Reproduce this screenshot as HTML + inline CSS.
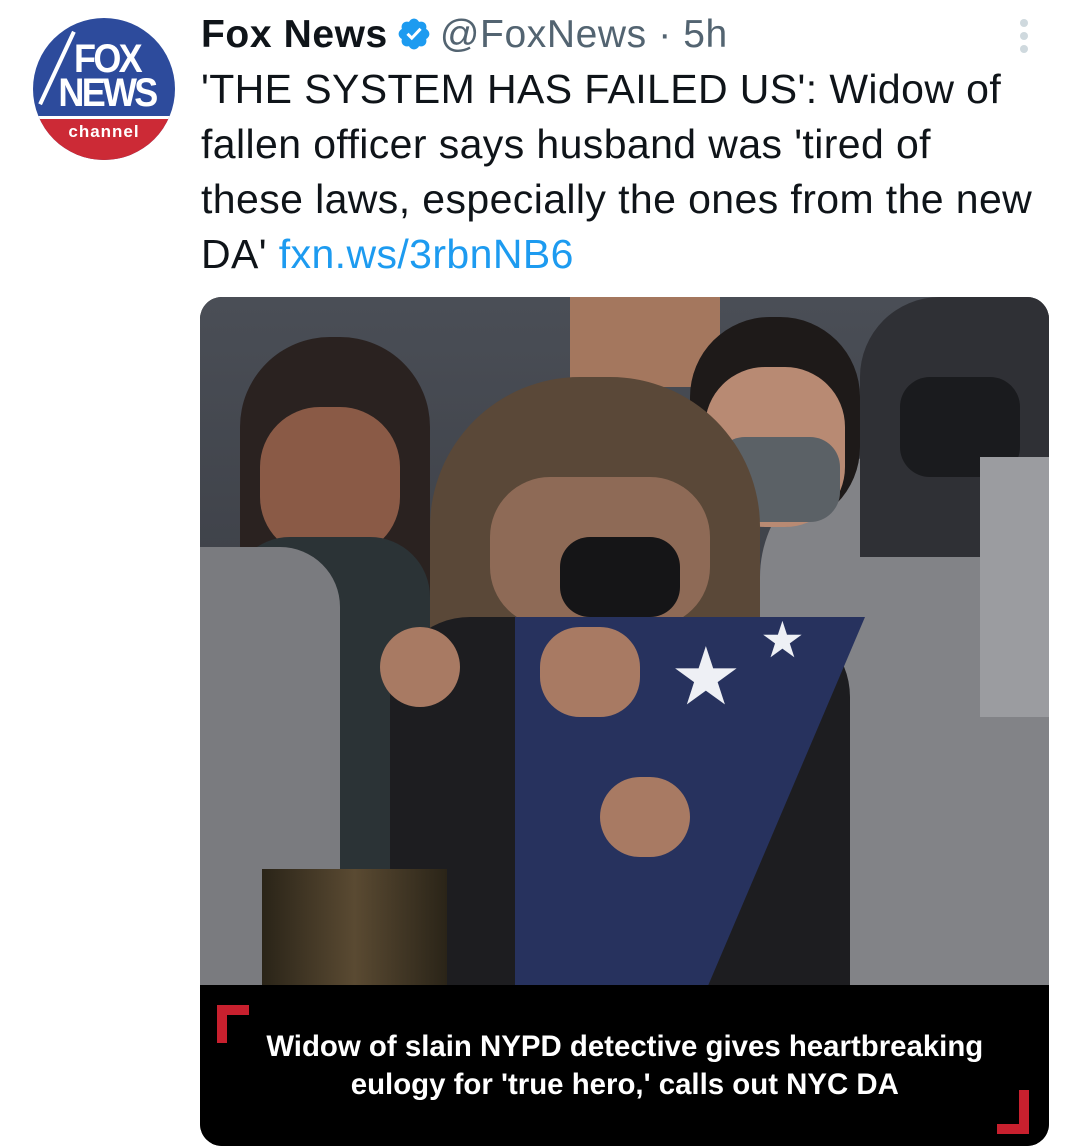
<!DOCTYPE html>
<html><head><meta charset="utf-8"><style>
*{margin:0;padding:0;box-sizing:border-box}
body{width:1080px;height:1148px;background:#fff;font-family:"Liberation Sans",Arial,sans-serif;position:relative;overflow:hidden}
.abs{position:absolute}
.txt{font-size:41px;color:#0f1419;line-height:55px;letter-spacing:0.4px;white-space:nowrap}
.card{left:200px;top:297px;width:849px;height:849px;border-radius:22px;overflow:hidden;background:#000}
</style></head><body>
<div class="abs" style="left:33px;top:18px;width:142px;height:142px;border-radius:50%;overflow:hidden;background:#2d4b9c">
  <div class="abs" style="left:0;top:100px;width:142px;height:42px;background:#cc2a36"></div>
  <div class="abs" style="left:0;top:98px;width:142px;height:3px;background:#fff"></div>
  <div class="abs" style="left:14px;top:24px;width:120px;text-align:center;color:#fff;font:bold 40px/34px 'Liberation Sans',sans-serif;letter-spacing:-3px;transform:scaleX(0.9)">FOX<br>NEWS</div>
  <div class="abs" style="left:0;top:104px;width:142px;text-align:center;color:#fff;font:bold 17px 'Liberation Sans',sans-serif;letter-spacing:1px">channel</div>
  <div class="abs" style="left:22px;top:10px;width:4px;height:80px;background:#fff;transform:rotate(25deg)"></div>
</div>
<div class="abs" style="left:201px;top:12px;font-size:39px;line-height:46px;white-space:nowrap;letter-spacing:0.6px">
  <b style="color:#0f1419">Fox News</b><svg width="36" height="36" viewBox="0 0 24 24" style="vertical-align:-5px;margin:0 8px 0 8px"><path fill="#1d9bf0" d="M22.25 12c0-1.43-.88-2.67-2.190-3.34.46-1.39.2-2.9-.81-3.91s-2.520-1.27-3.910-.81c-.66-1.31-1.91-2.19-3.34-2.19s-2.67.88-3.33 2.19c-1.4-.46-2.91-.2-3.92.81s-1.26 2.52-.8 3.91C2.630 9.33 1.75 10.57 1.75 12s.88 2.67 2.2 3.34c-.46 1.39-.21 2.9.8 3.910s2.52 1.26 3.91.81c.67 1.31 1.91 2.19 3.34 2.19s2.68-.88 3.34-2.19c1.39.45 2.9.2 3.91-.81s1.27-2.52.81-3.910c1.31-.67 2.19-1.91 2.19-3.34z"/><path fill="#fff" d="M10.54 16.2l-3.6-3.6 1.42-1.42 2.18 2.18 5.1-5.5 1.47 1.36z"/></svg><span style="color:#536471">@FoxNews · 5h</span>
</div>
<div class="abs" style="left:1020px;top:19px;width:8px">
  <div style="width:8px;height:8px;border-radius:50%;background:#cfd9de;margin-bottom:5px"></div>
  <div style="width:8px;height:8px;border-radius:50%;background:#cfd9de;margin-bottom:5px"></div>
  <div style="width:8px;height:8px;border-radius:50%;background:#cfd9de"></div>
</div>
<div class="abs txt" style="left:201px;top:62px;width:870px">'THE SYSTEM HAS FAILED US': Widow of<br>fallen officer says husband was 'tired of<br>these laws, especially the ones from the new<br>DA' <span style="color:#1d9bf0">fxn.ws/3rbnNB6</span></div>
<div class="abs card">
  <div class="abs" style="left:0;top:0;width:849px;height:688px;background:linear-gradient(180deg,#4a4e56,#2e3036)"></div>
  <div class="abs" style="left:40px;top:40px;width:190px;height:300px;border-radius:90px 90px 20px 20px;background:#2a2220"></div>
  <div class="abs" style="left:60px;top:110px;width:140px;height:150px;border-radius:60px;background:#8a5a46"></div>
  <div class="abs" style="left:30px;top:240px;width:200px;height:448px;border-radius:60px 60px 0 0;background:#2b3336"></div>
  <div class="abs" style="left:0;top:250px;width:140px;height:438px;border-radius:0 60px 0 0;background:#7a7b7f"></div>
  <div class="abs" style="left:370px;top:0;width:150px;height:90px;background:#a4775e"></div>
  <div class="abs" style="left:560px;top:160px;width:289px;height:528px;border-radius:120px 60px 0 0;background:#828387"></div>
  <div class="abs" style="left:490px;top:20px;width:170px;height:210px;border-radius:80px;background:#1e1a19"></div>
  <div class="abs" style="left:505px;top:70px;width:140px;height:160px;border-radius:60px;background:#b88a73"></div>
  <div class="abs" style="left:515px;top:140px;width:125px;height:85px;border-radius:30px;background:#5b6166"></div>
  <div class="abs" style="left:660px;top:0;width:189px;height:260px;border-radius:80px 20px 0 0;background:#2f3035"></div>
  <div class="abs" style="left:700px;top:80px;width:120px;height:100px;border-radius:30px;background:#1a1b1e"></div>
  <div class="abs" style="left:780px;top:160px;width:69px;height:260px;background:#9b9ca0"></div>
  <div class="abs" style="left:230px;top:80px;width:330px;height:608px;border-radius:150px 150px 20px 20px;background:#5a4838"></div>
  <div class="abs" style="left:290px;top:180px;width:220px;height:150px;border-radius:60px;background:#8e6a56"></div>
  <div class="abs" style="left:360px;top:240px;width:120px;height:80px;border-radius:30px;background:#151517"></div>
  <div class="abs" style="left:190px;top:320px;width:460px;height:368px;border-radius:80px 80px 0 0;background:#1d1d20"></div>
  <div class="abs" style="left:315px;top:320px;width:350px;height:370px;background:#27325e;clip-path:polygon(0 0,100% 0,55% 100%,0 100%)"></div>
  <div class="abs" style="left:470px;top:340px;color:#eef0f5;font-size:80px;line-height:80px">★</div>
  <div class="abs" style="left:560px;top:318px;color:#eef0f5;font-size:50px;line-height:50px">★</div>
  <div class="abs" style="left:340px;top:330px;width:100px;height:90px;border-radius:40px;background:#a87a63"></div>
  <div class="abs" style="left:400px;top:480px;width:90px;height:80px;border-radius:40px;background:#a87a63"></div>
  <div class="abs" style="left:180px;top:330px;width:80px;height:80px;border-radius:40px;background:#a87a63"></div>
  <div class="abs" style="left:62px;top:572px;width:185px;height:116px;background:linear-gradient(90deg,#2a2418,#5a4a32,#2a2418)"></div>
  <div class="abs" style="left:0;top:688px;width:849px;height:161px;background:#000"></div>
  <div class="abs" style="left:17px;top:708px;width:32px;height:10px;background:#c8202e"></div>
  <div class="abs" style="left:17px;top:708px;width:10px;height:38px;background:#c8202e"></div>
  <div class="abs" style="left:797px;top:827px;width:32px;height:10px;background:#c8202e"></div>
  <div class="abs" style="left:819px;top:793px;width:10px;height:44px;background:#c8202e"></div>
  <div class="abs" style="left:0;top:731px;width:849px;text-align:center;color:#fff;font:bold 30px/38px 'Liberation Sans',sans-serif;white-space:nowrap"><span style="display:inline-block;transform:scaleX(0.98)">Widow of slain NYPD detective gives heartbreaking<br>eulogy for 'true hero,' calls out NYC DA</span></div>
</div>
</body></html>
